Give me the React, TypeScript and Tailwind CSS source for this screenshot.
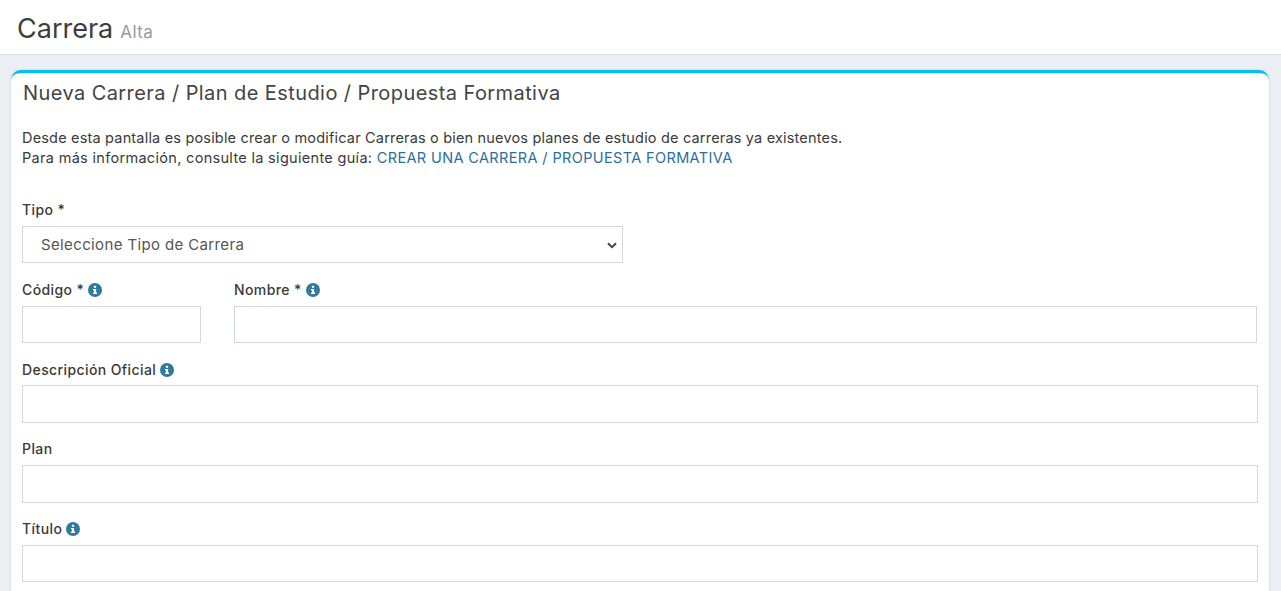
const font = { fontFamily: 'Inter, "Open Sans", sans-serif' }

function InfoDot() {
  return (
    <svg className="ml-[4px] mt-[2px] h-[14px] w-[14px] shrink-0" viewBox="0 0 14 14">
      <circle cx="7" cy="7" r="7" fill="#31799f" />
      <rect x="5.9" y="2.8" width="2.2" height="2" fill="#fff" />
      <path d="M5 6h3.1v3.6h1v1.4H5V9.6h1V7.4H5z" fill="#fff" />
    </svg>
  )
}

function FieldLabel({ children, info }: { children: string; info?: boolean }) {
  return (
    <label className="flex h-[20px] items-center pb-[2px] text-[14px] font-medium tracking-[0.4px] text-[#3a3a3a]">
      {children}
      {info && <InfoDot />}
    </label>
  )
}

function TextBox({ className }: { className?: string }) {
  return <input className={`block w-full border border-[#d2d6de] bg-white ${className ?? 'h-[37px]'}`} />
}

export default function App() {
  return (
    <div style={font} className="h-[591px] overflow-hidden bg-[#ebeef3] text-[#333]">
      <header className="flex h-[55px] items-baseline gap-[7px] border-b border-[#dfe2e7] bg-white pl-[17px] pt-[11px]">
        <h1 className="text-[27px] font-normal leading-[36px] text-[#3d3d3d]">Carrera</h1>
        <small className="text-[17px] tracking-[0.4px] text-[#9a9a9a]">Alta</small>
      </header>

      <main className="pl-[11px] pr-[12px] pt-[15px]">
        <section className="rounded-[10px] border-t-[3px] border-[#00c0ef] bg-white pb-[20px] pl-[11px] pr-[11px] shadow-[0_0_2px_rgba(0,0,0,0.2)]">
          <h2 className="pl-[1px] pt-[7px] text-[20px] font-normal leading-[27px] tracking-[0.42px] text-[#444]">
            Nueva Carrera / Plan de Estudio / Propuesta Formativa
          </h2>

          <p className="mt-[21px] text-[14.5px] leading-[20px] tracking-[0.18px] text-[#3a3a3a]">
            Desde esta pantalla es posible crear o modificar Carreras o bien nuevos planes de estudio de carreras ya
            existentes.
            <br />
            <span className="tracking-[0.31px]">Para más información, consulte la siguiente guía: </span>
            <a className="tracking-[0.37px] text-[#2a6f9e]">CREAR UNA CARRERA / PROPUESTA FORMATIVA</a>
          </p>

          <div className="mt-[32px]">
            <FieldLabel>Tipo *</FieldLabel>
            <div className="mt-[6px] flex h-[37px] w-[601px] items-center justify-between border border-[#d2d6de] pl-[18px] pr-[5px] pt-[1px] text-[15px] tracking-[0.37px] text-[#555]">
              <span>Seleccione Tipo de Carrera</span>
              <svg className="h-[7px] w-[10px]" viewBox="0 0 10 7">
                <path d="M1 1.2l4 4 4-4" fill="none" stroke="#444" strokeWidth="2" />
              </svg>
            </div>
          </div>

          <div className="mt-[17px] flex gap-[33px]">
            <div className="w-[179px] shrink-0">
              <FieldLabel info>Código *</FieldLabel>
              <TextBox className="mt-[6px] h-[37px]" />
            </div>
            <div className="flex-1 pr-[1px]">
              <FieldLabel info>Nombre *</FieldLabel>
              <TextBox className="mt-[6px] h-[37px]" />
            </div>
          </div>

          <div className="mt-[17px]">
            <FieldLabel info>Descripción Oficial</FieldLabel>
            <TextBox className="mt-[5px] h-[38px]" />
          </div>

          <div className="mt-[16px]">
            <FieldLabel>Plan</FieldLabel>
            <TextBox className="mt-[6px] h-[38px]" />
          </div>

          <div className="mt-[16px]">
            <FieldLabel info>Título</FieldLabel>
            <TextBox className="mt-[6px] h-[37px]" />
          </div>
        </section>
      </main>
    </div>
  )
}
